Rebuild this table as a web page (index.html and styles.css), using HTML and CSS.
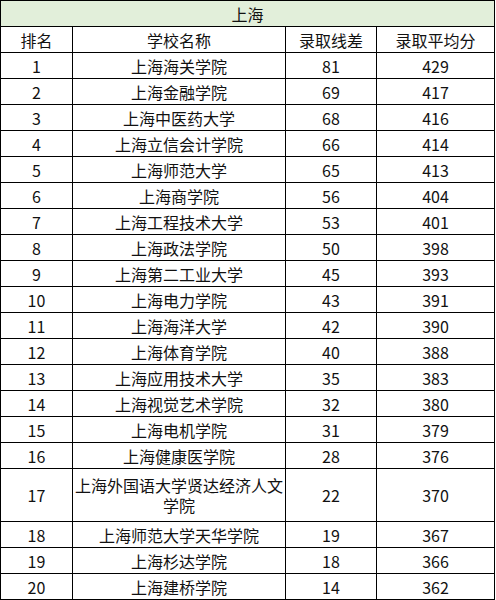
FILE: index.html
```html
<!DOCTYPE html>
<html lang="zh-CN">
<head>
<meta charset="utf-8">
<title>上海</title>
<link rel="stylesheet" href="styles.css">
</head>
<body>
<table class="score-table">
  <colgroup>
    <col class="c-rank">
    <col class="c-name">
    <col class="c-diff">
    <col class="c-avg">
  </colgroup>
  <thead>
    <tr class="title-row"><th colspan="4">上海</th></tr>
    <tr class="head-row"><th>排名</th><th>学校名称</th><th>录取线差</th><th>录取平均分</th></tr>
  </thead>
  <tbody>
    <tr><td>1</td><td>上海海关学院</td><td>81</td><td>429</td></tr>
    <tr><td>2</td><td>上海金融学院</td><td>69</td><td>417</td></tr>
    <tr><td>3</td><td>上海中医药大学</td><td>68</td><td>416</td></tr>
    <tr><td>4</td><td>上海立信会计学院</td><td>66</td><td>414</td></tr>
    <tr><td>5</td><td>上海师范大学</td><td>65</td><td>413</td></tr>
    <tr><td>6</td><td>上海商学院</td><td>56</td><td>404</td></tr>
    <tr><td>7</td><td>上海工程技术大学</td><td>53</td><td>401</td></tr>
    <tr><td>8</td><td>上海政法学院</td><td>50</td><td>398</td></tr>
    <tr><td>9</td><td>上海第二工业大学</td><td>45</td><td>393</td></tr>
    <tr><td>10</td><td>上海电力学院</td><td>43</td><td>391</td></tr>
    <tr><td>11</td><td>上海海洋大学</td><td>42</td><td>390</td></tr>
    <tr><td>12</td><td>上海体育学院</td><td>40</td><td>388</td></tr>
    <tr><td>13</td><td>上海应用技术大学</td><td>35</td><td>383</td></tr>
    <tr><td>14</td><td>上海视觉艺术学院</td><td>32</td><td>380</td></tr>
    <tr><td>15</td><td>上海电机学院</td><td>31</td><td>379</td></tr>
    <tr><td>16</td><td>上海健康医学院</td><td>28</td><td>376</td></tr>
    <tr class="tall"><td>17</td><td>上海外国语大学贤达经济人文学院</td><td>22</td><td>370</td></tr>
    <tr><td>18</td><td>上海师范大学天华学院</td><td>19</td><td>367</td></tr>
    <tr><td>19</td><td>上海杉达学院</td><td>18</td><td>366</td></tr>
    <tr><td>20</td><td>上海建桥学院</td><td>14</td><td>362</td></tr>
  </tbody>
</table>
</body>
</html>
```
FILE: styles.css
```css
html, body {
  margin: 0;
  padding: 0;
  background: #ffffff;
}
.score-table {
  border-collapse: collapse;
  table-layout: fixed;
  width: 495px;
  font-family: "Noto Sans CJK SC", "Noto Sans", sans-serif;
  font-size: 16px;
  color: #111111;
}
.c-rank { width: 72px; }
.c-name { width: 213px; }
.c-diff { width: 91px; }
.c-avg { width: 118px; }
.score-table th,
.score-table td {
  border: 1px solid #000000;
  padding: 0;
  height: 25px;
  line-height: 20px;
  text-align: center;
  vertical-align: middle;
  font-weight: normal;
}
.title-row th {
  background: #e2efda;
}
.tall td {
  height: 52px;
}
.score-table tbody tr:last-child td {
  border-bottom-width: 2px;
}
```
